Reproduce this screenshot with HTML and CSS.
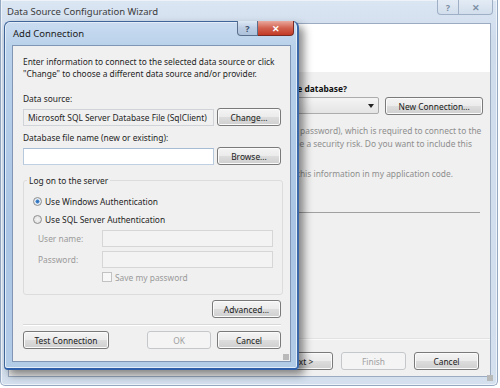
FILE: index.html
```html
<!DOCTYPE html>
<html lang="en">
<head>
  <meta charset="UTF-8">
  <title>Data Source Configuration Wizard</title>
  <link rel="stylesheet" href="styles.css">
</head>
<body>
  <div class="desktop">
    <div class="window wizard">
      <div class="titlebar">
        <span class="title">Data Source Configuration Wizard</span>
        <div class="caption-btns">
          <div class="cap help">?</div>
          <div class="cap close">&#x2715;</div>
        </div>
      </div>
      <div class="client">
        <div class="wiz-header"></div>
        <div class="wiz-body">
          <p class="question">Which data connection should your application use to connect to the database?</p>
          <div class="conn-row">
            <div class="combo"><span class="arrow"></span></div>
            <button class="btn">New Connection...</button>
          </div>
          <p class="sensitive">This connection string appears to contain sensitive data (for example, a password), which is required to connect to the<br>database. However, storing sensitive data in the connection string can be a security risk. Do you want to include this<br>sensitive data in the connection string?</p>
          <p class="sensitive opt">No, exclude sensitive data from the connection string. I will set this information in my application code.</p>
          <div class="expander"><span class="rule"></span></div>
        </div>
        <div class="wiz-footer">
          <button class="btn">&lt; Previous</button>
          <button class="btn">Next &gt;</button>
          <button class="btn" disabled>Finish</button>
          <button class="btn">Cancel</button>
        </div>
      </div>
      <span class="grip"></span>
    </div>

    <div class="window dialog">
      <div class="titlebar">
        <span class="title">Add Connection</span>
        <div class="caption-btns">
          <div class="cap help">?</div>
          <div class="cap close">&#x2715;</div>
        </div>
      </div>
      <div class="client">
        <p class="intro">Enter information to connect to the selected data source or click<br>"Change" to choose a different data source and/or provider.</p>

        <label class="field-label first">Data source:</label>
        <div class="field-row">
          <div class="textbox readonly">Microsoft SQL Server Database File (SqlClient)</div>
          <button class="btn">Change...</button>
        </div>

        <label class="field-label">Database file name (new or existing):</label>
        <div class="field-row">
          <div class="textbox focus"></div>
          <button class="btn">Browse...</button>
        </div>

        <fieldset class="group">
          <legend>Log on to the server</legend>
          <div class="radio checked">Use Windows Authentication</div>
          <div class="radio">Use SQL Server Authentication</div>
          <div class="cred-grid">
            <span class="muted">User name:</span>
            <div class="textbox disabled"></div>
            <span class="muted">Password:</span>
            <div class="textbox disabled"></div>
            <span></span>
            <div class="check">Save my password</div>
          </div>
        </fieldset>

        <div class="advanced-row">
          <button class="btn">Advanced...</button>
        </div>
        <div class="separator"></div>
        <div class="dialog-footer">
          <button class="btn wide">Test Connection</button>
          <div class="right-btns">
            <button class="btn" disabled>OK</button>
            <button class="btn">Cancel</button>
          </div>
        </div>
      </div>
      <span class="grip"></span>
    </div>
  </div>
</body>
</html>
```

FILE: styles.css
```css
body {
  margin: 0;
  font-family: 'Noto Sans', 'Open Sans', sans-serif;
  font-size: 8.4px;
  color: #1e1e1e;
  background: #ffffff;
}
p {
  margin: 0;
}
.desktop {
  position: relative;
  width: 500px;
  height: 388px;
  overflow: hidden;
}

/* window chrome */
.window {
  box-sizing: border-box;
  display: flex;
  flex-direction: column;
}
.titlebar {
  position: relative;
  height: 23px;
  display: flex;
  align-items: center;
  flex-shrink: 0;
}
.title {
  font-size: 9.5px;
  color: #1b1b1b;
}
.caption-btns {
  position: absolute;
  top: -1px;
  display: flex;
}
.cap {
  height: 15px;
  display: flex;
  align-items: center;
  justify-content: center;
  font-size: 9px;
  font-weight: bold;
  box-sizing: border-box;
}
.client {
  flex: 1;
  display: flex;
  flex-direction: column;
  background: #f0f0f0;
  box-sizing: border-box;
}
.grip {
  position: absolute;
  width: 6px;
  height: 6px;
  background-image: radial-gradient(circle, #b8b8b8 0.7px, transparent 0.9px);
  background-size: 2px 2px;
}

/* background wizard (inactive) */
.wizard {
  position: relative;
  width: 498px;
  height: 386px;
  padding: 0 6px 8px 7px;
  background: linear-gradient(#dbe6f3, #cfdcec 40px, #d4e0ee);
  border: 1px solid #95a8c2;
  border-top: none;
  border-radius: 0 0 5px 5px;
  box-shadow: inset 0 0 0 1px #eef3fa;
}
.wizard .title {
  margin-left: -1px;
  color: #3c3c3c;
}
.wizard .caption-btns {
  right: -2px;
  top: 0;
}
.wizard .cap {
  border: 1px solid #9fb0c6;
  border-top: none;
  background: linear-gradient(#e3ebf5, #d2deec);
  color: #7d8ea4;
}
.wizard .help {
  width: 22px;
  border-radius: 0 0 0 4px;
}
.wizard .close {
  width: 34px;
  border-left: none;
  border-radius: 0 0 4px 0;
}
.wizard .client {
  border: 1px solid #9aabc2;
}
.wiz-header {
  height: 48px;
  background: #ffffff;
  flex-shrink: 0;
}
.wiz-body {
  flex: 1;
  padding: 11px 7px 0 12px;
}
.question {
  width: 326px;
  display: flex;
  justify-content: flex-end;
  white-space: nowrap;
  font-weight: bold;
  color: #111;
}
.conn-row {
  display: flex;
  gap: 6px;
  margin-top: 3px;
}
.combo {
  position: relative;
  width: 360px;
  height: 17px;
  box-sizing: border-box;
  border: 1px solid #acacac;
  border-radius: 2px;
  background: linear-gradient(#f4f4f4, #e4e4e4);
}
.arrow {
  position: absolute;
  right: 4px;
  top: 6px;
  border: 3px solid transparent;
  border-top: 4px solid #222;
  border-bottom: none;
}
.sensitive {
  margin: 9px 0 0 -3px;
  color: #8e8e8e;
  line-height: 13px;
  white-space: nowrap;
}
.sensitive.opt {
  margin: 4px 0 0 0;
  width: 432px;
  display: flex;
  justify-content: flex-end;
}
.expander {
  margin-top: 32px;
  display: flex;
  justify-content: flex-end;
  padding-right: 3px;
}
.rule {
  width: 380px;
  height: 1px;
  background: #a0a0a0;
}
.wiz-footer {
  height: 38px;
  flex-shrink: 0;
  box-sizing: border-box;
  border-top: 1px solid #e2e2e2;
  box-shadow: inset 0 1px 0 #fafafa;
  display: flex;
  justify-content: flex-end;
  align-items: flex-start;
  gap: 8px;
  padding: 13px 11px 0 0;
}
.wizard .grip {
  right: 4px;
  bottom: 4px;
}

/* active dialog */
.dialog {
  position: absolute;
  left: 4px;
  top: 21px;
  width: 295px;
  height: 349px;
  padding: 0 6px 6px 7px;
  background: linear-gradient(#c9dcf1, #b9d1ea 25px, #a9c4e4 60%, #b2cbe7);
  border: 1px solid #3f6599;
  border-bottom: 2px solid #2f5fa8;
  border-right: 2px solid #3b68a9;
  border-radius: 6px 6px 4px 4px;
  box-shadow: inset 0 0 0 1px #e3edf8, 5px 5px 9px rgba(0, 0, 0, 0.45);
}
.dialog .title {
  padding-left: 1px;
}
.dialog .caption-btns {
  right: -3px;
}
.dialog .cap {
  border: 1px solid #5a6f8c;
  border-top: none;
}
.dialog .help {
  width: 21px;
  border-radius: 0 0 0 4px;
  background: linear-gradient(#dde8f4, #bccde3 50%, #aec2dc);
  color: #3c4f6a;
}
.dialog .close {
  width: 36px;
  border-left: none;
  border-color: #7a2a22;
  border-radius: 0 0 4px 0;
  background: linear-gradient(#e9a99d, #d2614f 50%, #c23a26);
  color: #ffffff;
}
.dialog .client {
  border: 1px solid #8196b4;
  padding: 10px 9px 0 10px;
}
.intro {
  line-height: 12px;
}
.field-label {
  display: block;
  margin-top: 6px;
  line-height: 12px;
}
.field-label.first {
  margin-top: 13px;
}
.field-row {
  display: flex;
  justify-content: space-between;
  align-items: center;
  margin-top: 3px;
}
.textbox {
  box-sizing: border-box;
  width: 191px;
  height: 17px;
  border: 1px solid #c9cdd4;
  background: #ffffff;
  padding: 0 4px;
  line-height: 15px;
  white-space: nowrap;
  overflow: hidden;
}
.textbox.readonly {
  background: #f0f0f0;
  border-color: #d0d3d8;
}
.textbox.focus {
  border-color: #a6bbd4 #b7c9dd #bfd0e3;
}
.textbox.disabled {
  width: 171px;
  background: #f3f3f3;
  border-color: #d6d6d6;
}

/* buttons */
.btn {
  box-sizing: border-box;
  height: 18px;
  min-width: 64px;
  padding: 0 8px;
  font-family: inherit;
  font-size: 8.4px;
  color: #1a1a1a;
  border: 1px solid #7a7a7a;
  border-radius: 3px;
  background: linear-gradient(#f4f4f4, #ebebeb 50%, #dddddd 51%, #cfcfcf);
  box-shadow: inset 0 0 0 1px #fbfbfb;
}
.btn:disabled {
  color: #a0a0a0;
  border-color: #c5c8ca;
  background: #f4f4f4;
  box-shadow: none;
}
.conn-row .btn {
  width: 98px;
}
.wiz-footer .btn {
  width: 65px;
}
.btn.wide {
  width: 86px;
}

/* group box */
.group {
  margin: 10px 0 0 0;
  padding: 9px 9px 11px 9px;
  border: 1px solid #dcdcdc;
  border-radius: 3px;
  display: flex;
  flex-direction: column;
  gap: 6px;
}
.group legend {
  padding: 0 2px;
  margin-left: -6px;
}
.radio,
.check {
  display: flex;
  align-items: center;
  gap: 3px;
  height: 12px;
}
.radio::before {
  content: '';
  width: 9px;
  height: 9px;
  border-radius: 50%;
  border: 1px solid #8f8f8f;
  background: radial-gradient(circle, #f6f6f6, #d8d8d8);
  box-sizing: border-box;
}
.radio.checked::before {
  background: radial-gradient(circle, #2a6ab3 0, #4d8cd0 1.8px, #e8eef5 2.3px, #d9dde2);
}
.cred-grid {
  display: grid;
  grid-template-columns: 69px 171px;
  align-items: center;
  row-gap: 4px;
  margin-top: -1px;
}
.cred-grid .muted {
  padding-left: 5px;
}
.muted {
  color: #9a9a9a;
}
.check {
  color: #9a9a9a;
  gap: 3px;
  margin-top: -1px;
}
.check::before {
  content: '';
  width: 10px;
  height: 10px;
  box-sizing: border-box;
  border: 1px solid #c2c2c2;
  background: #f7f7f7;
}
.advanced-row {
  display: flex;
  justify-content: flex-end;
  margin-top: 5px;
}
.advanced-row .btn {
  width: 69px;
}
.separator {
  margin-top: 6px;
  height: 1px;
  background: #d8d8d8;
  box-shadow: 0 1px 0 #ffffff;
}
.dialog-footer {
  display: flex;
  justify-content: space-between;
  margin-top: 6px;
}
.right-btns {
  display: flex;
  gap: 6px;
}
.dialog .grip {
  right: 8px;
  bottom: 8px;
}
```
